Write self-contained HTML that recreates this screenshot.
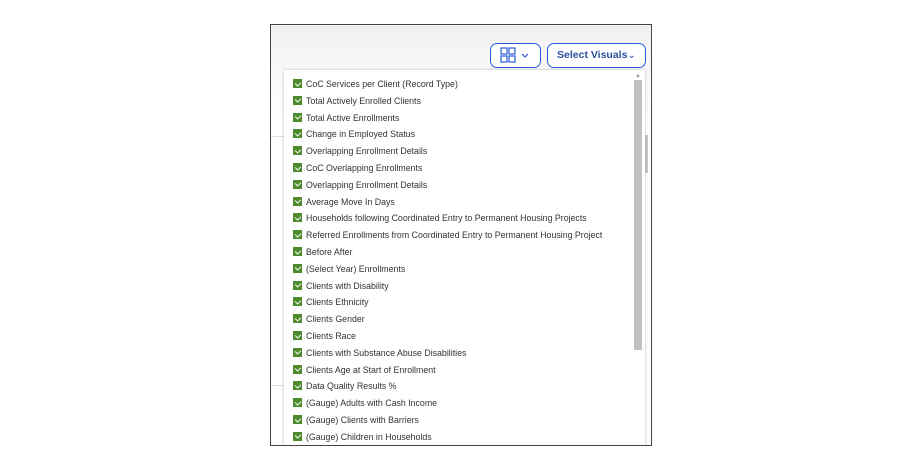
<!DOCTYPE html><html><head><style>
body{margin:0;width:924px;height:468px;background:#fff;position:relative;overflow:hidden;font-family:"Liberation Sans",sans-serif}
.frame{position:absolute;left:270px;top:24px;width:380px;height:420px;border:1px solid #444;background:linear-gradient(#f0f0f0,#fafafa 60px,#fff 100px);overflow:hidden}
.btn{position:absolute;top:18px;height:25px;border:1.5px solid #2a5bd7;border-radius:7px;background:#fff;box-sizing:border-box;color:#2a4f9e;font-size:10.5px;font-weight:bold;line-height:22px}
.dd{position:absolute;left:13px;top:45px;width:361px;height:390px;background:#fff;box-shadow:0 0 3px rgba(0,0,0,.25)}
.it{position:absolute;left:9px;height:12px;font-size:8.8px;color:#333;line-height:12px;white-space:nowrap}
.cb{display:inline-block;width:9px;height:9px;background:#4e8a2e;vertical-align:-1px;margin-right:4px;position:relative}
.cb:after{content:"";position:absolute;left:2.5px;top:1.5px;width:3px;height:4px;border:solid #fff;border-width:0 1px 1px 0;transform:rotate(45deg)}
.sb{position:absolute;left:350px;top:10px;width:8px;height:270px;background:#c1c1c1}
.gl{position:absolute;left:0;width:13px;height:1px;background:#ddd}
</style></head><body>
<div class="frame">
<div class="gl" style="top:111px"></div><div class="gl" style="top:360px"></div>
<div style="position:absolute;left:374px;top:110px;width:3px;height:38px;background:#c8c8c8"></div>
<div class="btn" style="left:219px;width:51px">
<svg width="48" height="22" viewBox="0 0 48 22"><g fill="none" stroke="#2a5bd7" stroke-width="1.2"><rect x="10" y="4" width="6" height="6"/><rect x="18" y="4" width="6" height="6"/><rect x="10" y="12" width="6" height="6"/><rect x="18" y="12" width="6" height="6"/><path d="M31 10l3 3 3-3"/></g></svg></div>
<div class="btn" style="left:276px;width:99px;padding-left:9px">Select Visuals<span style="font-weight:normal;font-size:10px">&#8964;</span></div>
<div class="dd">
<div style="position:absolute;left:351px;top:3px;font-size:6px;color:#999">▲</div>
<div class="sb"></div>
<div id="l"></div>
</div></div>
<script>
var t=["CoC Services per Client (Record Type)","Total Actively Enrolled Clients","Total Active Enrollments","Change in Employed Status","Overlapping Enrollment Details","CoC Overlapping Enrollments","Overlapping Enrollment Details","Average Move In Days","Households following Coordinated Entry to Permanent Housing Projects","Referred Enrollments from Coordinated Entry to Permanent Housing Project","Before After","(Select Year) Enrollments","Clients with Disability","Clients Ethnicity","Clients Gender","Clients Race","Clients with Substance Abuse Disabilities","Clients Age at Start of Enrollment","Data Quality Results %","(Gauge) Adults with Cash Income","(Gauge) Clients with Barriers","(Gauge) Children in Households"];
var h="";t.forEach(function(s,i){h+='<div class="it" style="top:'+(8+i*16.8)+'px"><span class="cb"></span>'+s+'</div>'});document.getElementById("l").innerHTML=h;
</script>
</body></html>
